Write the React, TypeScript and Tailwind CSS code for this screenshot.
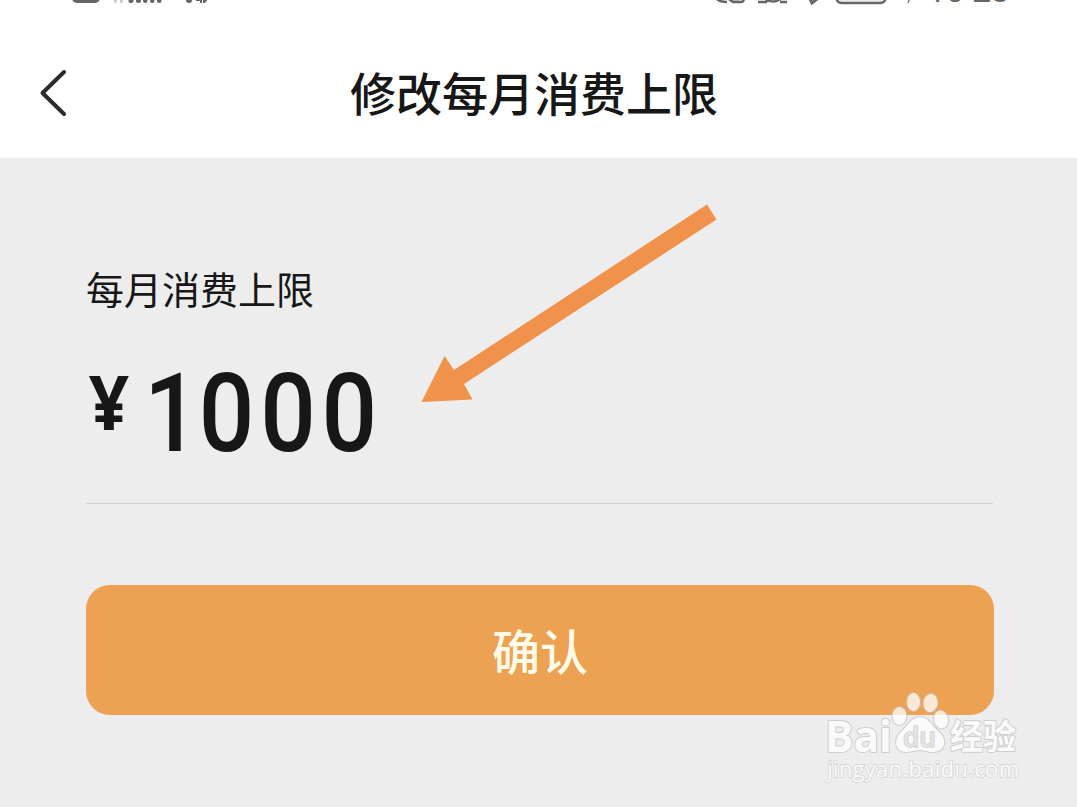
function StatusBar() {
  return (
    <div className="flex h-2 justify-between overflow-hidden pl-[60px] pr-[57px]">
      <svg width="160" height="8" viewBox="60 0 160 8" fill="#666">
        <rect x="72" y="-20" width="28" height="23" rx="5" />
        <g fill="#ccc">
          <path d="M114 -1H118L116 3H114Z" />
          <path d="M120 -1H124L122 3H120Z" />
        </g>
        <rect x="128.500" y="-12" width="5" height="15" rx="2" />
        <rect x="136" y="-12" width="5" height="15" rx="2" />
        <rect x="143" y="-12" width="4.500" height="15" rx="2" />
        <rect x="150" y="-12" width="4.500" height="15" rx="2" />
        <rect x="157" y="-12" width="4.500" height="15" rx="2" />
        <circle cx="189" cy="0" r="3" />
        <path d="M196 -1H202V3H200V1H196ZM203 3V-1H208L205 3Z" />
      </svg>
      <div className="flex">
        <svg width="212" height="8" viewBox="715 0 212 8" fill="none" stroke="#666" strokeWidth="2.500">
          <path d="M716 -2Q719 2 727 2" />
          <path d="M726 -3L733 2H741Q744 2 744 -3M731 -1H740" />
          <path d="M758 2H767M764 -2Q773 5 782 -2M780 2H787" />
          <path d="M810 -1L812 3L817 -1" strokeWidth="3" />
          <rect x="836.500" y="-18" width="49" height="21" rx="5" fill="#e8ecea" />
          <path d="M910 -2L908 3" strokeWidth="1.200" />
        </svg>
        <span className="-mt-[30px] w-[93px] whitespace-nowrap font-['Roboto',sans-serif] text-[34px] leading-10 tracking-[-0.5px] text-[#666]">
          10<span className="relative -top-1">:</span>28
        </span>
      </div>
    </div>
  )
}

function Header() {
  return (
    <header className="grid h-[150px] grid-cols-[100px_1fr_109px] items-start bg-white">
      <button type="button" aria-label="返回" className="ml-9 mt-[59px] w-8">
        <svg width="34" height="52" viewBox="0 0 34 52" fill="none" stroke="#2b2b2b" strokeWidth="4" strokeLinecap="round" strokeLinejoin="round">
          <path d="M28 5L6.500 26L28 47" />
        </svg>
      </button>
      <h1 className="mt-[49px] whitespace-nowrap text-center text-[46px] font-medium leading-[68px]">修改每月消费上限</h1>
    </header>
  )
}

function Arrow() {
  return (
    <svg className="absolute left-[420px] top-[204px]" width="298" height="200" viewBox="420 204 298 200">
      <path d="M707 204.500L716.500 219.500L464 384L472.500 399.500L421.500 402L444.500 356L454 370Z" fill="#f0924c" />
    </svg>
  )
}

function Watermark() {
  return (
    <svg
      className="absolute left-[815px] top-[680px]"
      width="220"
      height="110"
      viewBox="815 680 220 110"
      fill="#fff"
      stroke="#c4c4c4"
      strokeWidth="2"
      strokeLinejoin="round"
      paintOrder="stroke"
      opacity=".75"
    >
      <text x="825" y="751.500" fontSize="43" fontWeight="700" fontFamily="'Open Sans', sans-serif" textLength="67" lengthAdjust="spacingAndGlyphs">Bai</text>
      <ellipse cx="899.500" cy="716" rx="7" ry="9" />
      <ellipse cx="913.500" cy="702" rx="6.500" ry="9" />
      <ellipse cx="930.500" cy="703" rx="7" ry="9" transform="rotate(8 930.5 703)" />
      <ellipse cx="941" cy="719.500" rx="7" ry="9" transform="rotate(-12 941 719.5)" />
      <path d="M920 717C929 717 932 726 939 732C948 740 945 752 933 752C927 752 924 750 920 750C915 750 911 752 906 752C896 752 893 741 900 733C907 727 911 717 920 717Z" />
      <text x="903" y="747" fontSize="27" fill="#e0e0e0" strokeWidth="1.500" fontWeight="600" fontFamily="'Open Sans', sans-serif" textLength="33" lengthAdjust="spacingAndGlyphs">du</text>
      <text x="950" y="749" fontSize="34" fontWeight="700" fontFamily="'Noto Sans CJK SC', sans-serif" textLength="66" lengthAdjust="spacingAndGlyphs">经验</text>
      <text x="827" y="777" fontSize="22" strokeWidth="1.800" stroke="#cfcfcf" fontWeight="500" fontFamily="'Open Sans', sans-serif" textLength="192">jingyan.baidu.com</text>
    </svg>
  )
}

export default function App() {
  return (
    <div className="relative h-[807px] w-[1077px] overflow-hidden bg-white font-['Noto_Sans_CJK_SC',sans-serif] text-[#171717]">
      <StatusBar />
      <Header />
      <main className="h-[649px] bg-[#ededed] pl-[86px] pr-[83px] pt-[102px]">
        <label className="block text-[38px] leading-14">每月消费上限</label>
        <div className="mr-[1px] flex h-[188px] items-start border-b border-[#d2d2d2] pt-[43px]">
          <span className="w-[58px] origin-left scale-x-[.93] pl-[3px] font-['Open_Sans',sans-serif] text-[76px] font-bold leading-[84px]">¥</span>
          <span className="origin-left scale-x-[.89] font-['Roboto',sans-serif] text-[110px] font-medium leading-[110px] tracking-[6.500px]">
            <span className="tracking-[-1px]">1</span>000
          </span>
        </div>
        <button type="button" className="mt-[81px] h-[130px] w-full rounded-3xl bg-[#eca153] pb-[2px] text-5xl font-medium text-[#fffbe9]">
          确认
        </button>
      </main>
      <Arrow />
      <Watermark />
    </div>
  )
}
